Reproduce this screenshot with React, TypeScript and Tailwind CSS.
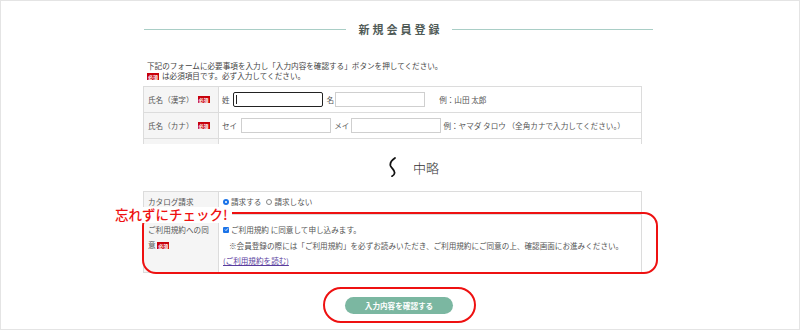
import React from "react";

const Badge = () => (
  <span className="inline-flex items-center justify-center w-[12px] h-[7px] bg-[#c8000a] text-white text-[5px] leading-none font-bold align-middle">
    必須
  </span>
);

const Field = ({ w = 90, focused = false }: { w?: number; focused?: boolean }) => (
  <div
    className={
      focused
        ? "h-[15px] border-[1.5px] border-[#222] rounded-[2px] bg-white flex items-center pl-[2px]"
        : "h-[15px] border border-[#cfcfcf] bg-white"
    }
    style={{ width: w }}
  >
    {focused && <span className="w-px h-[9px] bg-[#222]" />}
  </div>
);

const Radio = ({ on, className = "" }: { on?: boolean; className?: string }) =>
  on ? (
    <span className={"shrink-0 w-[6px] h-[6px] rounded-full bg-[#1a73e8] flex items-center justify-center " + className}>
      <span className="w-[2px] h-[2px] rounded-full bg-white" />
    </span>
  ) : (
    <span className={"shrink-0 w-[6px] h-[6px] rounded-full border border-[#888] bg-white " + className} />
  );

export default function App() {
  return (
    <div className="relative w-[800px] h-[330px] overflow-hidden bg-white shadow-[inset_0_0_0_1px_#e4e4e4] text-[#555] font-['Noto_Sans_CJK_JP','Noto_Sans',sans-serif]">
      {/* 見出し */}
      <div className="ml-[144px] w-[509px] pt-[21px] flex items-center h-[37px]">
        <div className="flex-1 h-px bg-[#a9cec6]" />
        <h2 className="pl-[13px] pr-[9px] text-[11px] font-bold tracking-[3px] text-[#505b57] leading-[16px]">
          新規会員登録
        </h2>
        <div className="flex-1 h-px bg-[#a9cec6]" />
      </div>

      <div className="ml-[143px] w-[499px]">
        {/* 説明 */}
        <div className="mt-[24px] pl-[4px] text-[7.6px] leading-[10px] text-[#444]">
          <p>下記のフォームに必要事項を入力し「入力内容を確認する」ボタンを押してください。</p>
          <p className="flex items-center gap-[3px]">
            <Badge />
            <span>は必須項目です。必ず入力してください。</span>
          </p>
        </div>

        {/* 入力テーブル 上 */}
        <div className="mt-[5px] border-t border-x border-[#dcdcdc] text-[7.6px]">
          <div className="flex h-[26px] border-b border-[#dcdcdc]">
            <div className="w-[75px] bg-[#f5f5f5] border-r border-[#dcdcdc] flex items-center pl-[4px] gap-[4px]">
              <span>氏名（漢字）</span>
              <Badge />
            </div>
            <div className="flex-1 flex items-center pl-[3px]">
              <span>姓</span>
              <div className="ml-[3px]"><Field focused /></div>
              <span className="ml-[4px]">名</span>
              <div className="ml-[1px]"><Field /></div>
              <span className="ml-[14px]">例：山田 太郎</span>
            </div>
          </div>
          <div className="flex h-[26px] border-b border-[#dcdcdc]">
            <div className="w-[75px] bg-[#f5f5f5] border-r border-[#dcdcdc] flex items-center pl-[4px] gap-[4px]">
              <span>氏名（カナ）</span>
              <Badge />
            </div>
            <div className="flex-1 flex items-center pl-[3px]">
              <span>セイ</span>
              <div className="ml-[4px]"><Field /></div>
              <span className="ml-[3px]">メイ</span>
              <div className="ml-[2px]"><Field /></div>
              <span className="ml-[2px] whitespace-nowrap">例：ヤマダ タロウ （全角カナで入力してください。）</span>
            </div>
          </div>
          <div className="flex h-[5px]">
            <div className="w-[75px] bg-[#f5f5f5] border-r border-[#dcdcdc]" />
          </div>
        </div>

        {/* 中略 */}
        <div className="h-[47px] flex items-center pl-[245px] gap-[15px]">
          <svg width="10" height="20" viewBox="0 0 10 20" className="mt-[-1px]">
            <path d="M7 1 C4 3 1.6 6 2.6 9 C3.6 11.5 7 13 6.6 16 C6.4 17.5 5.2 18.6 4 19.2" fill="none" stroke="#111" strokeWidth="1.8" strokeLinecap="round" />
          </svg>
          <span className="text-[13px] font-light text-[#333]">中略</span>
        </div>

        {/* 入力テーブル 下 */}
        <div className="border border-[#dcdcdc] text-[7.6px]">
          <div className="flex h-[23px] border-b border-[#dcdcdc]">
            <div className="w-[75px] bg-[#f5f5f5] border-r border-[#dcdcdc] flex items-center pl-[4px] pb-[3px]">
              カタログ請求
            </div>
            <div className="flex-1 flex items-center pl-[4px] pb-[3px]">
              <Radio on />
              <span className="ml-[2px]">請求する</span>
              <Radio className="ml-[5px]" />
              <span className="ml-[2px]">請求しない</span>
            </div>
          </div>
          <div className="flex h-[57px]">
            <div className="w-[75px] bg-[#f5f5f5] border-r border-[#dcdcdc] pl-[4px] pr-[8px] pt-[7px] leading-[15px]">
              ご利用規約への同意 <Badge />
            </div>
            <div className="flex-1 pl-[4px] pt-[7px] leading-[15.5px]">
              <div className="flex items-center">
                <span className="shrink-0 w-[6px] h-[6px] rounded-[1px] bg-[#1a73e8] flex items-center justify-center">
                  <svg width="5" height="5" viewBox="0 0 5 5">
                    <path d="M1 2.6 L2 3.6 L4 1.3" fill="none" stroke="#fff" strokeWidth="0.9" />
                  </svg>
                </span>
                <span className="ml-[2px]">ご利用規約 に同意して申し込みます。</span>
              </div>
              <p className="pl-[6px] whitespace-nowrap">
                ※会員登録の際には「ご利用規約」を必ずお読みいただき、ご利用規約にご同意の上、確認画面にお進みください。
              </p>
              <p>
                <a className="text-[#5a3d9e] underline">(ご利用規約を読む)</a>
              </p>
            </div>
          </div>
        </div>

        {/* ボタン */}
        <button className="mt-[24px] ml-[202px] w-[108px] h-[17px] rounded-full bg-[#7bb7a1] text-white text-[7.6px] font-bold flex items-center justify-center">
          入力内容を確認する
        </button>
      </div>

      {/* 注釈 */}
      <div className="absolute left-[142px] top-[212px] w-[516px] h-[62px] border-2 border-[#ee1111] rounded-[14px]" />
      <div className="absolute left-[111px] top-[207px] h-[16px] bg-white px-[4px] text-[13.5px] leading-[15px] text-[#ee1111] font-medium">
        忘れずにチェック!
      </div>
      <div className="absolute left-[323px] top-[287px] w-[153px] h-[36px] border-2 border-[#ee1111] rounded-full" />
    </div>
  );
}
